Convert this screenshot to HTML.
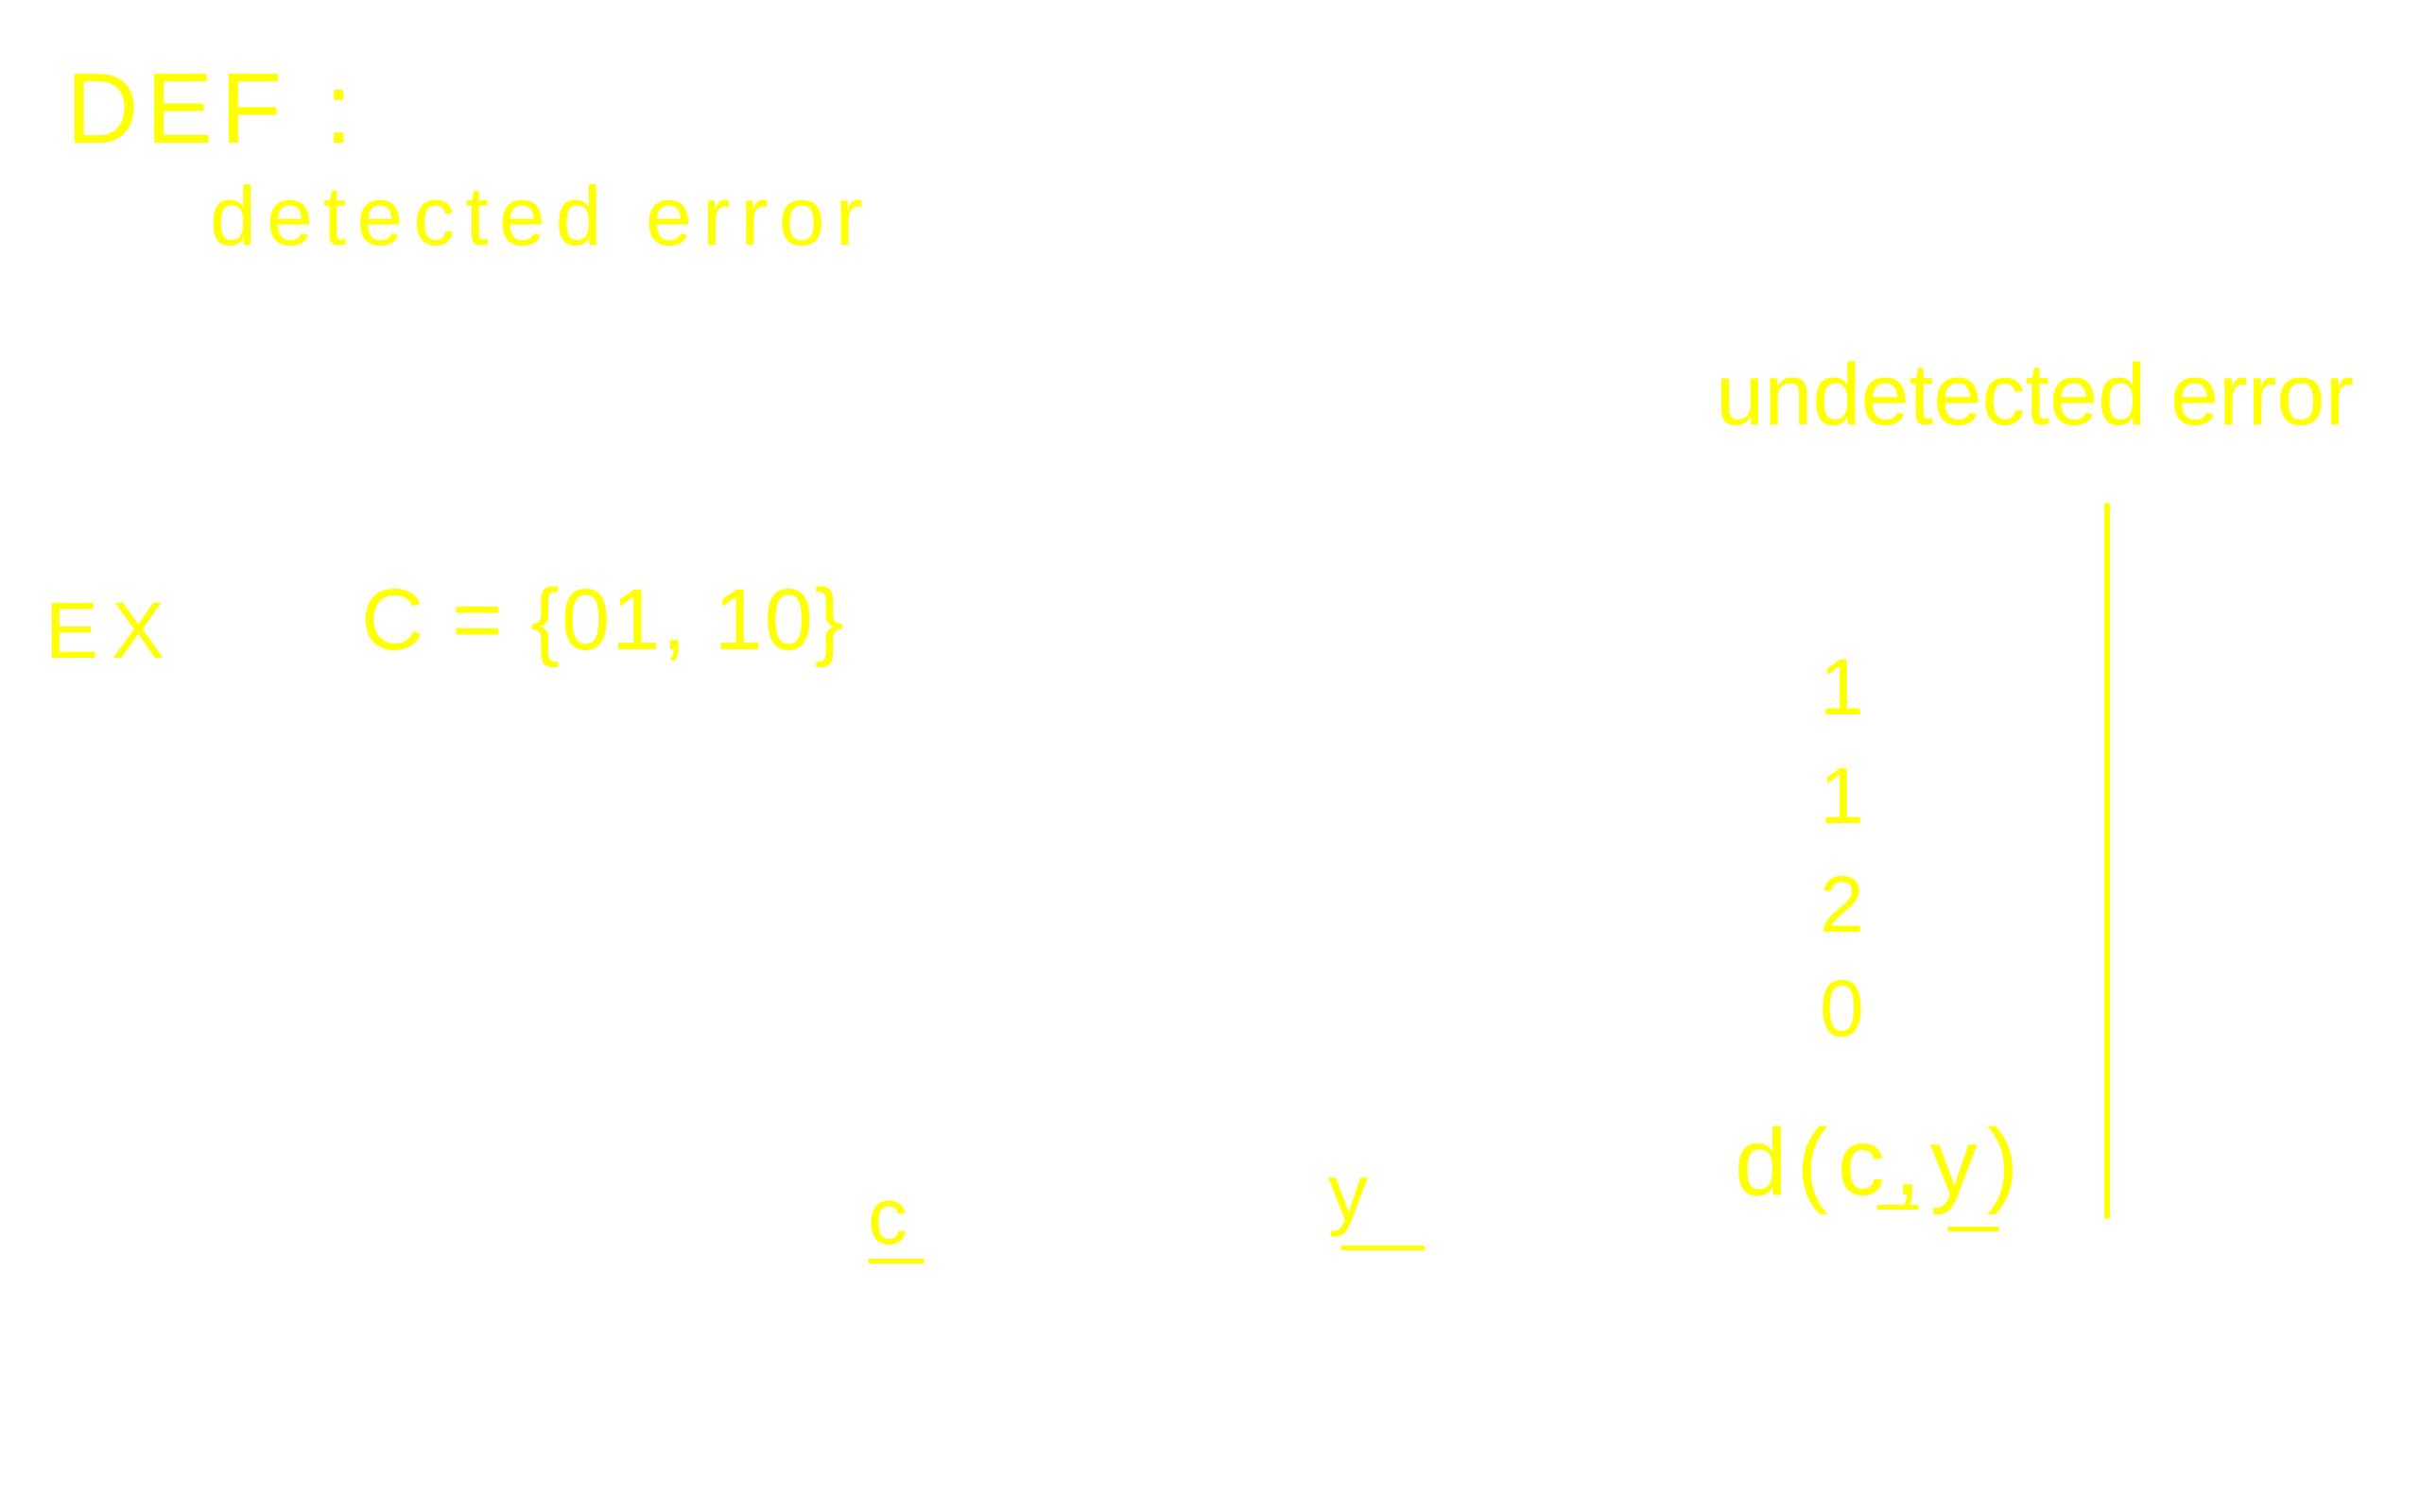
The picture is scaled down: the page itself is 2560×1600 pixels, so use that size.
<!DOCTYPE html>
<html><head><meta charset="utf-8"><style>
html,body{margin:0;padding:0;background:#fff;width:2560px;height:1600px;overflow:hidden}
.t{position:absolute;font-family:"Liberation Sans",sans-serif;color:#ffff00;white-space:nowrap;line-height:1;font-weight:normal}
.u{position:absolute;background:#ffff00;height:5px;border-radius:3px}
</style></head><body>
<div class="t" style="left:70px;top:62px;font-size:106px;letter-spacing:8px">DEF :</div>
<div class="t" style="left:222px;top:185px;font-size:88px;letter-spacing:11px">detected error</div>
<div class="t" style="left:1815px;top:372px;font-size:92px;letter-spacing:0px">undetected error</div>
<div class="t" style="left:48px;top:625px;font-size:84px;letter-spacing:14px">EX</div>
<div class="t" style="left:382px;top:610px;font-size:92px;letter-spacing:2px">C = {01, 10}</div>
<div class="t" style="left:1925px;top:685px;font-size:84px">1</div>
<div class="t" style="left:1925px;top:800px;font-size:84px">1</div>
<div class="t" style="left:1925px;top:915px;font-size:84px">2</div>
<div class="t" style="left:1925px;top:1025px;font-size:84px">0</div>
<div class="u" style="left:2226px;top:532px;width:6px;height:758px"></div>
<div class="t" style="left:918px;top:1245px;font-size:84px">c</div>
<div class="u" style="left:918px;top:1332px;width:60px"></div>
<div class="t" style="left:1405px;top:1220px;font-size:84px">y</div>
<div class="u" style="left:1418px;top:1318px;width:90px"></div>
<div class="t" style="left:1835px;top:1180px;font-size:100px;letter-spacing:10px">d(c,y)</div>
<div class="u" style="left:1985px;top:1275px;width:45px"></div>
<div class="u" style="left:2060px;top:1298px;width:55px"></div>
</body></html>
